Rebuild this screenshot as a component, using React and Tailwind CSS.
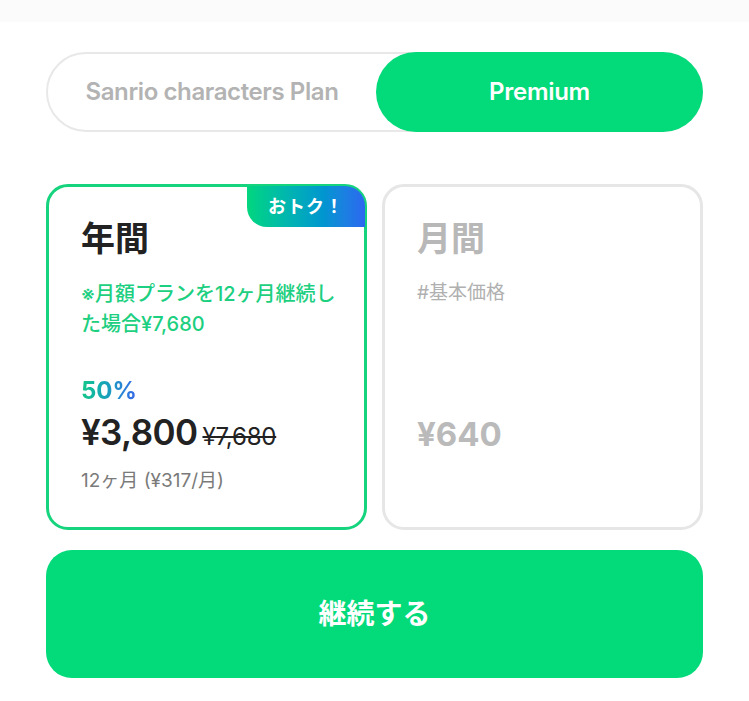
import React from 'react';

const font = { fontFamily: 'Inter, "Noto Sans CJK JP", sans-serif' };

function PlanToggle() {
  return (
    <div className="flex h-[80px] rounded-full border-2 border-[#e8e8e8] bg-white">
      <div className="flex flex-1 items-center justify-center text-[24px] font-semibold tracking-[-0.4px] text-[#b3b3b3]">
        Sanrio characters Plan
      </div>
      <div className="-my-[2px] -mr-[2px] flex w-[327px] items-center justify-center rounded-full bg-[#03da7a] text-[24px] font-semibold tracking-[-0.3px] text-white">
        Premium
      </div>
    </div>
  );
}

function YearCard() {
  return (
    <div className="relative flex h-[346px] flex-col rounded-[22px] border-[3px] border-[#16d47e] bg-white pl-[32px] pr-[8px] pt-[31px]">
      <div className="absolute -right-[1px] -top-[1px] flex h-[41px] w-[118px] items-center justify-center rounded-bl-[20px] rounded-tr-[20px] bg-gradient-to-r from-[#06d67d] to-[#2b67f0] text-[18px] font-bold tracking-[1px] text-white">
        おトク！
      </div>
      <div className="text-[34px] font-bold leading-[42px] text-[#222]">年間</div>
      <div className="mt-[19px] whitespace-nowrap text-[20px] font-medium leading-[30px] text-[#1dcf80]">
        ※月額プランを12ヶ月継続し<br />た場合¥7,680
      </div>
      <div className="mt-[37px] w-fit bg-gradient-to-r from-[#16c884] to-[#3764ea] bg-clip-text text-[24px] font-bold leading-[30px] text-transparent">
        50%
      </div>
      <div className="mt-[4px] flex items-baseline">
        <span className="text-[35px] font-semibold leading-[44px] tracking-[-0.6px] text-[#222]">¥3,800</span>
        <span className="ml-[5px] text-[24px] font-normal tracking-[-0.2px] text-[#222] line-through decoration-[2px]">¥7,680</span>
      </div>
      <div className="mt-[13px] text-[19px] leading-[26px] text-[#7a7a7a]">12ヶ月 (¥317/月)</div>
    </div>
  );
}

function MonthCard() {
  return (
    <div className="flex h-[346px] flex-col rounded-[22px] border-[3px] border-[#e6e6e6] bg-white px-[32px] pt-[31px]">
      <div className="text-[34px] font-bold leading-[42px] text-[#b8b8b8]">月間</div>
      <div className="mt-[18px] text-[19px] leading-[30px] text-[#b0b0b0]">#基本価格</div>
      <div className="mt-[104px] text-[33px] font-bold leading-[44px] text-[#bababa]">¥640</div>
    </div>
  );
}

export default function App() {
  return (
    <div className="min-h-[701px] w-[749px] bg-white" style={font}>
      <div className="h-[22px] bg-[#fbfbfb]" />
      <div className="px-[46px] pt-[30px]">
        <PlanToggle />
        <div className="mt-[52px] grid grid-cols-2 gap-[15px]">
          <YearCard />
          <MonthCard />
        </div>
        <button className="mt-[20px] flex h-[128px] w-full items-center justify-center rounded-[26px] bg-[#03da7a] text-[28px] font-bold text-white">
          継続する
        </button>
      </div>
    </div>
  );
}
